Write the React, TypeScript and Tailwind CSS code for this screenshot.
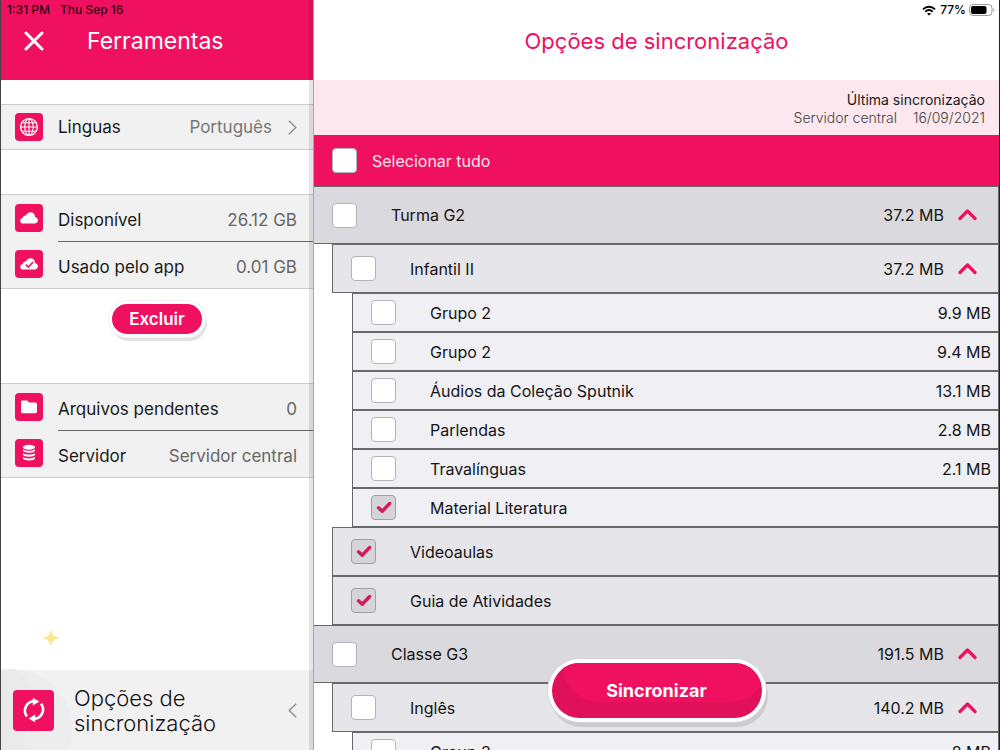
import { useState, type ReactNode } from 'react';

const sans = "font-['Inter','Liberation_Sans',sans-serif]";

function GlobeIcon() {
  return (
    <svg viewBox="0 0 20 20" className="size-5" fill="none" stroke="white" strokeWidth="1.1" aria-hidden="true">
      <circle cx="10" cy="10" r="8.4" strokeWidth="1.4" />
      <ellipse cx="10" cy="10" rx="4.2" ry="8.4" />
      <path d="M10 1.6v16.8M1.6 10h16.8M3 5.8h14M3 14.2h14" />
    </svg>
  );
}

function CloudIcon({ checked = false }: { checked?: boolean }) {
  return (
    <svg viewBox="0 0 20 20" className="size-5" aria-hidden="true">
      <path
        d="M4.2 15.6C2.4 15.6 1.2 14.5 1.2 13c0-1.6 1.1-2.7 2.5-2.9.1-1.8 1.5-2.8 3.2-2.6C7.7 5.6 9.4 4.2 11.4 4.2c2.6 0 4.6 2 4.7 4.7 1.7.4 2.8 1.7 2.8 3.4 0 1.9-1.4 3.3-3.3 3.3z"
        fill="white"
      />
      {checked && <path d="M6.8 10.6l2.6 2.6 4.6-5.3" fill="none" stroke="#ef1160" strokeWidth="1.6" />}
    </svg>
  );
}

function FolderIcon() {
  return (
    <svg viewBox="0 0 20 20" className="size-5" fill="white" aria-hidden="true">
      <path d="M2 5.2C2 4.300 2.700 3.600 3.600 3.600h4.200c.6 0 1 .2 1.300.7l.8 1.300h6.500c.9 0 1.600.7 1.600 1.600v7.400c0 .9-.7 1.600-1.600 1.600H3.600c-.9 0-1.600-.7-1.600-1.600z" />
    </svg>
  );
}

function DatabaseIcon() {
  return (
    <svg viewBox="0 0 20 20" className="size-5" fill="white" aria-hidden="true">
      <ellipse cx="10" cy="4.3" rx="6" ry="2.5" />
      <path d="M4 6.2c1.800 2.100 10.200 2.100 12 0v1.400c0 3-12 3-12 0z" />
      <path d="M4 10c1.800 2.100 10.200 2.100 12 0v1.400c0 3-12 3-12 0z" />
      <path d="M4 13.8c1.800 2.100 10.200 2.100 12 0v1.400c0 3-12 3-12 0z" />
    </svg>
  );
}

function SyncIcon() {
  return (
    <svg viewBox="0 0 26 26" className="size-[26px]" fill="none" stroke="white" strokeWidth="2.6" aria-hidden="true">
      <path d="M6 19.4A9.4 9.4 0 0 1 12.5 4.2M20 6.6A9.4 9.4 0 0 1 13.5 21.8" />
      <path d="M11.8.8l6.600 3.800-6.600 3.800zM14.200 25.200l-6.600-3.800 6.600-3.800z" fill="white" stroke="none" />
    </svg>
  );
}

function SideChevron({ back = false }: { back?: boolean }) {
  return (
    <svg viewBox="0 0 9 15" className="h-[15px] w-[9px] shrink-0" fill="none" stroke="#8a8a8a" strokeWidth="1.3" aria-hidden="true">
      <path d={back ? 'M8.2.7L1.2 7.5l7 6.8' : 'M.8.7l7 6.8-7 6.8'} />
    </svg>
  );
}

function Tile({ children }: { children: ReactNode }) {
  return <span className="flex size-7 shrink-0 items-center justify-center rounded bg-[#ef1160]">{children}</span>;
}

function InfoRow({ icon, label, value, divided = false }: { icon: ReactNode; label: string; value: string; divided?: boolean }) {
  return (
    <div className="flex pl-[14px]">
      <div className="flex w-[43px] items-center pb-0.5">
        <Tile>{icon}</Tile>
      </div>
      <div className={`flex flex-1 items-center justify-between pt-3 pr-4 pb-2 leading-[26px] ${divided ? 'border-b border-[#666]' : ''}`}>
        <dt className="text-[#1a1a1a]">{label}</dt>
        <dd className="text-[#666]">{value}</dd>
      </div>
    </div>
  );
}

function Sidebar() {
  return (
    <aside className="relative flex w-[31.4%] shrink-0 flex-col border-r border-l border-r-[#a8a8a8] border-l-[#444] bg-white text-[17px]">
      <header className="h-20 bg-[#ef1160]">
        <div className="flex h-5 items-center gap-[10px] pl-[6px] text-[12px] font-medium text-[#300010]">
          <span>1:31 PM</span>
          <span>Thu Sep 16</span>
        </div>
        <div className="flex h-[42px] items-center pl-[23px] text-white">
          <button type="button" aria-label="Fechar" className="flex size-5 items-center justify-center">
            <svg viewBox="0 0 20 20" className="size-5" stroke="white" strokeWidth="3" strokeLinecap="round" aria-hidden="true">
              <path d="M2 2l16 16M18 2L2 18" />
            </svg>
          </button>
          <h1 className="pl-[43px] text-[23px]">Ferramentas</h1>
        </div>
      </header>

      <button type="button" className="mt-6 flex h-[46px] w-full items-center border-y border-[#ccc] bg-[#f1f1f1] pr-4 pl-[14px] text-left">
        <Tile><GlobeIcon /></Tile>
        <span className="ml-[15px] flex-1 pt-0.5 text-[#1a1a1a]">Linguas</span>
        <span className="mr-4 pt-0.5 text-[#777]">Português</span>
        <SideChevron />
      </button>

      <dl className="mt-11 border-y border-[#ccc] bg-[#f1f1f1]">
        <InfoRow icon={<CloudIcon />} label="Disponível" value="26.12 GB" divided />
        <InfoRow icon={<CloudIcon checked />} label="Usado pelo app" value="0.01 GB" />
      </dl>

      <div className="flex h-[94px] justify-center pt-3">
        <button
          type="button"
          className="h-9 rounded-full border-[3px] border-white bg-[#ef1160] px-[17px] pt-0.5 text-[17px] font-semibold text-white shadow-[0_0_0_1px_#f1f1f1,2px_4px_0_0_#e2e2e2]"
        >
          Excluir
        </button>
      </div>

      <dl className="border-y border-[#ccc] bg-[#f1f1f1]">
        <InfoRow icon={<FolderIcon />} label="Arquivos pendentes" value="0" divided />
        <InfoRow icon={<DatabaseIcon />} label="Servidor" value="Servidor central" />
      </dl>

      <button type="button" className="relative mt-auto flex w-full items-center bg-[#f1f1f1] py-[14px] pr-4 pl-3 text-left">
        <svg viewBox="0 0 72 126" className="absolute bottom-0 left-0 h-[126px] w-[72px]" aria-hidden="true">
          <path d="M50 5c1 6 3 8 9 9-6 1-8 3-9 9-1-6-3-8-9-9 6-1 8-3 9-9z" fill="#fbe58f" />
          <path d="M0 46c38-6 71 22 71 60 0 7-1 14-3 20H0z" fill="#ededed" />
          <path d="M14 45c14 10 18 20 18 35 0 26-16 36-6 46H0V46z" fill="#eaeaea" />
        </svg>
        <span className="relative flex size-[41px] shrink-0 items-center justify-center rounded bg-[#ef1160]">
          <SyncIcon />
        </span>
        <span className="relative ml-5 flex-1 pt-0.5 text-[22px] leading-[25px] font-light text-[#111]">
          Opções de<br />sincronização
        </span>
        <SideChevron back />
      </button>
      <div className="pointer-events-none absolute inset-y-0 right-0 w-1 bg-black/10" />
    </aside>
  );
}

type Item = { id: number; level: 0 | 1 | 2; name: string; size?: string; checked?: boolean };

const items: Item[] = [
  { id: 1, level: 0, name: 'Turma G2', size: '37.2 MB' },
  { id: 2, level: 1, name: 'Infantil II', size: '37.2 MB' },
  { id: 3, level: 2, name: 'Grupo 2', size: '9.9 MB' },
  { id: 4, level: 2, name: 'Grupo 2', size: '9.4 MB' },
  { id: 5, level: 2, name: 'Áudios da Coleção Sputnik', size: '13.1 MB' },
  { id: 6, level: 2, name: 'Parlendas', size: '2.8 MB' },
  { id: 7, level: 2, name: 'Travalínguas', size: '2.1 MB' },
  { id: 8, level: 2, name: 'Material Literatura', checked: true },
  { id: 9, level: 1, name: 'Videoaulas', checked: true },
  { id: 10, level: 1, name: 'Guia de Atividades', checked: true },
  { id: 11, level: 0, name: 'Classe G3', size: '191.5 MB' },
  { id: 12, level: 1, name: 'Inglês', size: '140.2 MB' },
  { id: 13, level: 2, name: 'Group 3', size: '8 MB' },
];

const levelStyle = {
  0: 'h-[58px] border-l-0 bg-[#dad9de]',
  1: 'ml-[18px] h-[49px] bg-[#e6e5ea]',
  2: 'ml-[38px] h-[39px] bg-[#f0eff4]',
};

function CheckBox({ initial = false }: { initial?: boolean }) {
  const [on, setOn] = useState(initial);
  return (
    <span className="relative flex size-[25px] shrink-0">
      <input
        type="checkbox"
        checked={on}
        onChange={() => setOn(!on)}
        className="size-full appearance-none rounded border border-[#b3b3b8] bg-white checked:border-[#a0a0a4] checked:bg-[#d5d5d7]"
      />
      {on && (
        <svg viewBox="0 0 25 25" className="pointer-events-none absolute inset-0" fill="none" stroke="#d01c5c" strokeWidth="3.4" strokeLinecap="round" strokeLinejoin="round" aria-hidden="true">
          <path d="M7.5 12.8l3.700 3.500 7.500-7.800" />
        </svg>
      )}
    </span>
  );
}

function SyncRow({ item }: { item: Item }) {
  const expandable = item.level < 2 && item.size !== undefined;
  return (
    <li className={`flex shrink-0 items-center border border-[#68686a] pl-[18px] ${expandable ? 'pr-[21px]' : 'pr-[7px]'} ${levelStyle[item.level]}`}>
      <label className="flex flex-1 items-center gap-[34px]">
        <CheckBox initial={item.checked} />
        <span>{item.name}</span>
      </label>
      {item.size && <span>{item.size}</span>}
      {expandable && (
        <button type="button" aria-label={`Recolher ${item.name}`} className="ml-[14px]">
          <svg viewBox="0 0 19 12" className="h-3 w-[19px]" fill="none" stroke="#ef1160" strokeWidth="3.2" strokeLinecap="round" strokeLinejoin="round" aria-hidden="true">
            <path d="M2 9.500l7.500-7.500L17 9.500" />
          </svg>
        </button>
      )}
    </li>
  );
}

function StatusIcons() {
  return (
    <div className="flex h-5 items-center justify-end pr-1 text-[12px] font-medium text-black">
      <svg viewBox="0 0 14 11" className="h-[11px] w-[14px]" fill="none" stroke="black" strokeWidth="1.9" aria-hidden="true">
        <path d="M1 4.3C4.5.8 9.500.8 13 4.300M3.300 6.800c2.200-2.100 5.200-2.100 7.400 0" />
        <path d="M7 10.6L5 8.700c1.200-1.100 2.800-1.100 4 0z" fill="black" stroke="none" />
      </svg>
      <span className="ml-1">77%</span>
      <svg viewBox="0 0 26 12" className="ml-[3px] h-3 w-[26px]" aria-hidden="true">
        <rect x=".5" y=".5" width="22.5" height="11" rx="3.5" fill="none" stroke="#999" />
        <rect x="2" y="2" width="15.5" height="8" rx="2" fill="black" />
        <path d="M24.5 4v4c1.300-.5 1.300-3.500 0-4z" fill="#999" />
      </svg>
    </div>
  );
}

export default function App() {
  return (
    <div className={`flex h-screen overflow-hidden bg-white ${sans}`}>
      <Sidebar />
      <main className="relative flex min-w-0 flex-1 flex-col border-r border-[#222]">
        <header className="h-20 shrink-0 bg-white">
          <StatusIcons />
          <h2 className="flex h-[42px] items-center justify-center text-[22px] text-[#ef1160]">Opções de sincronização</h2>
        </header>
        <section className="flex h-[55px] shrink-0 flex-col justify-center bg-[#fce7ee] pt-0.5 pr-[14px] text-right text-[14px] leading-[18px]">
          <p className="text-[#1a1a1a]">Última sincronização</p>
          <p className="flex justify-end gap-4 font-light text-[#444]">
            <span>Servidor central</span>
            <span>16/09/2021</span>
          </p>
        </section>
        <label className="flex h-[51px] shrink-0 items-center gap-[15px] bg-[#ef1160] pl-[18px] text-[16px] text-[#ffe3ec]">
          <CheckBox />
          Selecionar tudo
        </label>
        <ul className="flex min-h-0 flex-1 flex-col overflow-hidden text-[16px] text-[#151515]">
          {items.map((item) => (
            <SyncRow key={item.id} item={item} />
          ))}
        </ul>
        <button
          type="button"
          className="absolute bottom-7 left-1/2 h-[63px] w-[218px] -translate-x-1/2 rounded-full bg-white p-1 text-[18px] font-bold text-white shadow-[0_0_0_1px_#d5d4d8,2px_5px_0_0_#cccbd0]"
        >
          <span className="relative flex size-full items-center justify-center overflow-hidden rounded-full bg-[#e01059]">
            <span className="absolute -top-8 -right-1 bottom-4 left-[11px] rounded-[36px] bg-[#ef1160]" />
            <span className="relative">Sincronizar</span>
          </span>
        </button>
      </main>
    </div>
  );
}
